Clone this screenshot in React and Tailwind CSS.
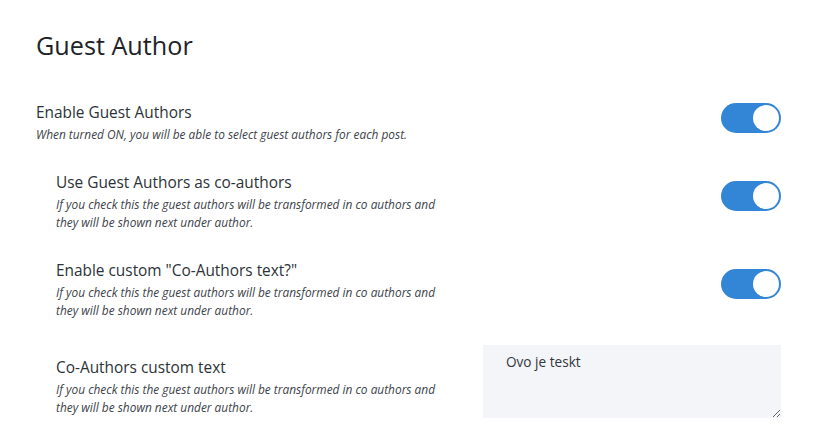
import React from 'react'

const Toggle = ({ on, onChange, className = '' }) => (
    <button
        onClick={onChange}
        className={`relative w-[60px] h-[30px] rounded-full shrink-0 transition ${on ? 'bg-[#3385d6]' : 'bg-gray-300'} ${className}`}
    >
        <span className={`absolute top-[2px] w-[26px] h-[26px] rounded-full bg-white transition-all ${on ? 'left-[32px]' : 'left-[2px]'}`} />
    </button>
)

const Setting = ({ title, desc, children, indent, className = '' }) => (
    <div className={`flex items-center justify-between ${indent ? 'pl-5' : ''} ${className}`}>
        <div className="w-[388px]">
            <div className="text-[15.4px] leading-[18px] text-[#2c3338]">{title}</div>
            <p className="mt-[4px] text-[11.9px] leading-[17.5px] italic text-[#3c434a]">{desc}</p>
        </div>
        {children}
    </div>
)

const App = () => {
    const [guest, setGuest] = React.useState(true)
    const [coAuthors, setCoAuthors] = React.useState(true)
    const [customText, setCustomText] = React.useState(true)
    const [text, setText] = React.useState('Ovo je teskt')

    const longDesc = 'If you check this the guest authors will be transformed in co authors and they will be shown next under author.'

    return (
        <div className="min-h-screen bg-white pl-[36px] pr-[40px] pt-[29px] font-['Open_Sans',sans-serif]">
            <h1 className="text-[25.2px] leading-[32px] text-[#1d2327]">Guest Author</h1>

            <Setting
                className="mt-[42px]"
                title="Enable Guest Authors"
                desc="When turned ON, you will be able to select guest authors for each post."
            >
                <Toggle on={guest} onChange={() => setGuest(!guest)} className="mb-[12px]" />
            </Setting>

            <Setting className="mt-[29px]" indent title="Use Guest Authors as co-authors" desc={longDesc}>
                <Toggle on={coAuthors} onChange={() => setCoAuthors(!coAuthors)} className="mb-[14px]" />
            </Setting>

            <Setting className="mt-[31px]" indent title={'Enable custom "Co-Authors text?"'} desc={longDesc}>
                <Toggle on={customText} onChange={() => setCustomText(!customText)} className="mb-[14px]" />
            </Setting>

            <div className="mt-[26px] flex items-start justify-between pl-5">
                <div className="w-[388px] mt-[14px]">
                    <div className="text-[15.4px] leading-[18px] text-[#2c3338]">Co-Authors custom text</div>
                    <p className="mt-[4px] text-[11.9px] leading-[17.5px] italic text-[#3c434a]">{longDesc}</p>
                </div>
                <textarea
                    value={text}
                    onChange={(e) => setText(e.target.value)}
                    className="w-[298px] h-[73px] bg-[#f4f5f8] pl-[23px] pr-3 pt-[7px] text-[13.6px] leading-[20px] text-[#32373c] outline-none"
                />
            </div>
        </div>
    )
}

export default App
